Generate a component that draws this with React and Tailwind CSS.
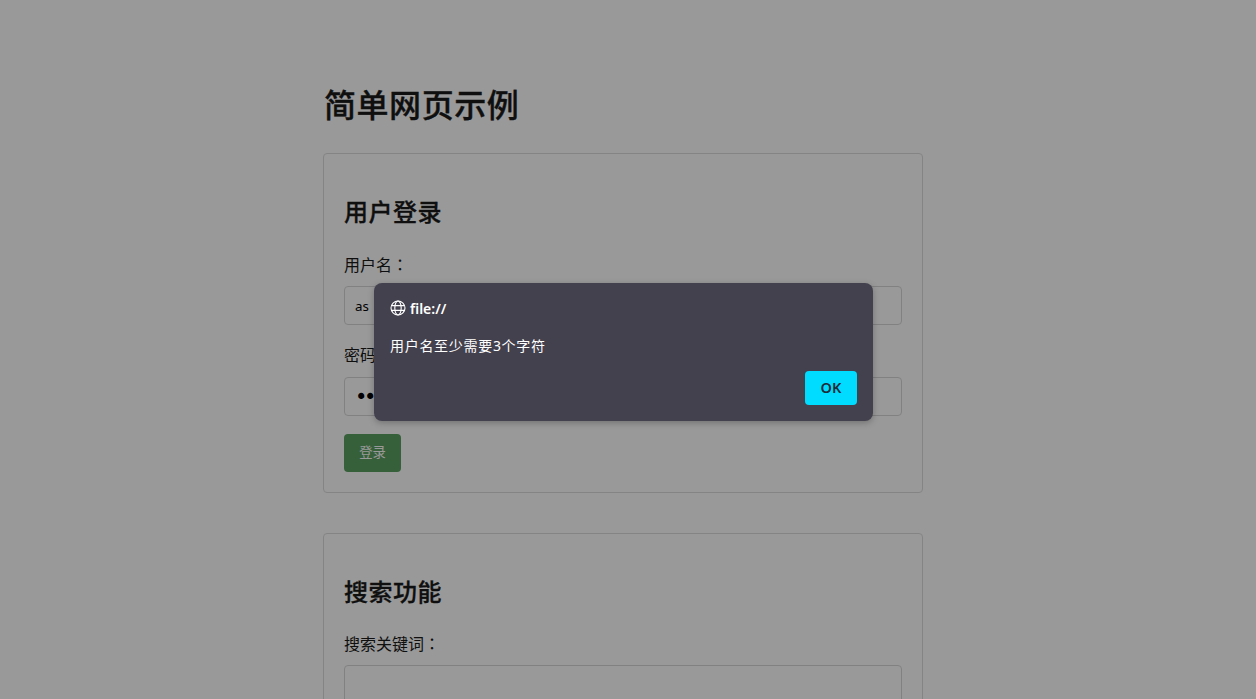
const cjk = { fontFamily: '"Noto Sans", "Noto Sans CJK SC", sans-serif' };

function Globe() {
  return (
    <svg width="16" height="16" viewBox="0 0 16 16" fill="none" stroke="currentColor" strokeWidth="1.1" className="shrink-0">
      <circle cx="8" cy="8" r="7" />
      <ellipse cx="8" cy="8" rx="3.2" ry="7" />
      <path d="M1.6 5.6H14.4M1.6 10.4H14.4" />
    </svg>
  );
}

function Field({ label, className, labelClass = "pt-[1px] mb-[9px]", children }) {
  return (
    <div className={className}>
      <label className={"block text-[16px] leading-[23px] " + labelClass}>
        {label}
        <span className="font-['Noto_Sans_CJK_TC'] leading-[0]">：</span>
      </label>
      {children}
    </div>
  );
}

function Input({ value = "" }) {
  return (
    <input
      type="text"
      defaultValue={value}
      className="block w-full h-[39px] px-[10px] bg-white border border-[#d8d8d8] rounded-[4px] text-[13.33px] text-black outline-none"
    />
  );
}

function PasswordInput() {
  return (
    <input
      type="password"
      defaultValue="as1"
      className="block w-full h-[39px] px-[10px] bg-white border border-[#d8d8d8] rounded-[4px] text-[21px] tracking-[-3.4px] font-['DejaVu_Sans'] text-black outline-none"
    />
  );
}

export default function App() {
  return (
    <div className="relative h-[699px] w-[1256px] overflow-hidden bg-white text-[#1a1a1a]" style={cjk}>
      <div className="w-[1246px] h-full">
        <div className="w-[600px] mx-auto pt-[82px]">
          <h1 className="text-[32px] leading-[46px] font-medium tracking-[0.55px] pl-[1px] mb-[25px] [-webkit-text-stroke:0.35px]">简单网页示例</h1>
          <section className="border border-[#ddd] rounded-[4px] px-[20px] pt-[40px] pb-[20px] mb-[40px]">
            <h2 className="text-[24px] leading-[35px] font-medium tracking-[0.5px] mb-[24px] [-webkit-text-stroke:0.3px]">用户登录</h2>
            <Field label="用户名" className="mb-[19px]"><Input value="as" /></Field>
            <Field label="密码" labelClass="mb-[10px]" className="mb-[18px]"><PasswordInput /></Field>
            <button className="block w-[57px] h-[38px] bg-[#5ba062] text-white text-[13.33px] rounded-[4px]">登录</button>
          </section>
          <section className="border border-[#ddd] rounded-[4px] px-[20px] pt-[40px] pb-[20px]">
            <h2 className="text-[24px] leading-[35px] font-medium tracking-[0.5px] mb-[23px] [-webkit-text-stroke:0.3px]">搜索功能</h2>
            <Field label="搜索关键词"><Input /></Field>
          </section>
        </div>
      </div>

      <div className="absolute inset-0 bg-black/40" />

      <div className="absolute left-[374px] top-[283px] w-[499px] h-[138px] rounded-[8px] bg-[#44414e] text-white shadow-[0_2px_6px_rgba(0,0,0,0.25)] px-[16px] pt-[15px] flex flex-col">
        <div className="flex items-center gap-[4px] h-[20px] text-[14px] font-semibold">
          <Globe />
          <span>file://</span>
        </div>
        <p className="mt-[18px] text-[14px] tracking-[0.7px] leading-[20px]">用户名至少需要3个字符</p>
        <div className="flex justify-end mt-[15px]">
          <button className="w-[52px] h-[34px] rounded-[4px] bg-[#00dcff] text-[#1d2a37] text-[14.5px] font-semibold">OK</button>
        </div>
      </div>
    </div>
  );
}
